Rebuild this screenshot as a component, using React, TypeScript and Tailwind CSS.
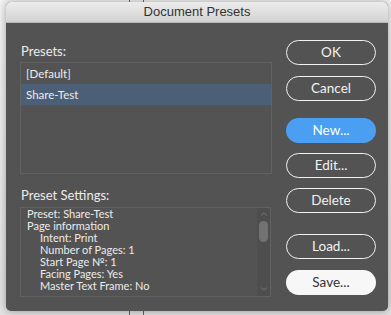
import { ChevronUp, ChevronDown } from "lucide-react";

const font = { fontFamily: "Lato, 'Open Sans', sans-serif" };

function PillButton({
  label,
  variant = "outline",
}: {
  label: string;
  variant?: "outline" | "primary" | "light";
}) {
  const base =
    "flex h-[25px] w-[90px] items-center justify-center rounded-full text-[13.5px]";
  const look =
    variant === "primary"
      ? "bg-[#4a9ff2] text-white"
      : variant === "light"
        ? "bg-[#f7f7f7] text-[#333]"
        : "border-[1.5px] border-[#f2f2f2] text-[#f2f2f2]";
  return <div className={`${base} ${look}`}>{label}</div>;
}

const settings: { text: string; indent?: boolean }[] = [
  { text: "Preset: Share-Test" },
  { text: "Page information" },
  { text: "Intent: Print", indent: true },
  { text: "Number of Pages: 1", indent: true },
  { text: "Start Page №: 1", indent: true },
  { text: "Facing Pages: Yes", indent: true },
  { text: "Master Text Frame: No", indent: true },
];

export default function App() {
  return (
    <div className="relative h-[315px] w-[391px] overflow-hidden bg-gradient-to-b from-[#f4f4f4] to-[#e2e2e2]">
      {/* guide lines from the document behind the dialog */}
      <div className="absolute left-[129px] top-0 h-full w-px bg-[#8a3cc8]" />
      <div className="absolute left-[143px] top-0 h-full w-px bg-[#8a3cc8]" />

      <div
        className="relative ml-[6px] mt-[2px] flex h-[309px] w-[382px] flex-col overflow-hidden rounded-[5px] bg-[#535353] shadow-[0_0_8px_rgba(0,0,0,0.35)]"
        style={font}
      >
        <div
          className="flex h-[21px] items-center justify-center border-b border-[#b5b5b5] bg-gradient-to-b from-[#ececec] to-[#d3d3d3] text-[13px] text-[#333]"
          style={{ fontFamily: "'Liberation Sans', Arial, sans-serif" }}
        >
          Document Presets
        </div>

        <div className="flex flex-1 pl-[14px] pr-[12px] pt-[17px]">
          <div className="flex w-[252px] flex-col pt-[2px]">
            <div className="pl-px text-[13px] leading-[18px] text-[#ececec]">
              Presets:
            </div>
            <div className="mt-[2px] h-[112px] border border-[#616161] bg-[#535353] text-[11.5px] text-[#ececec]">
              <div className="flex h-[21px] items-center pl-[5px]">
                [Default]
              </div>
              <div className="flex h-[21px] items-center bg-[#4b6077] pl-[5px]">
                Share-Test
              </div>
            </div>

            <div className="mt-[12px] pl-px text-[13px] leading-[18px] text-[#ececec]">
              Preset Settings:
            </div>
            <div className="mt-[3px] flex h-[90px] w-[251px] border border-[#616161] bg-[#535353]">
              <div className="flex-1 pl-[6px] text-[11px] leading-[12px] text-[#ececec]">
                {settings.map((s) => (
                  <div
                    key={s.text}
                    className={`h-[12px] whitespace-nowrap ${s.indent ? "pl-[13px]" : ""}`}
                  >
                    {s.text}
                  </div>
                ))}
              </div>
              <div className="flex w-[13px] flex-col items-center bg-[#4e4e4e]">
                <ChevronUp size={10} strokeWidth={1.5} className="mt-px text-[#8a8a8a]" />
                <div className="mt-[2px] h-[21px] w-[9px] rounded-full bg-[#727272]" />
                <div className="flex-1" />
                <ChevronDown size={10} strokeWidth={1.5} className="mb-[2px] text-[#8a8a8a]" />
              </div>
            </div>
          </div>

          <div className="ml-[14px] flex flex-col">
            <PillButton label="OK" />
            <div className="mt-[11px]">
              <PillButton label="Cancel" />
            </div>
            <div className="mt-[17px]">
              <PillButton label="New..." variant="primary" />
            </div>
            <div className="mt-[10px]">
              <PillButton label="Edit..." />
            </div>
            <div className="mt-[10px]">
              <PillButton label="Delete" />
            </div>
            <div className="mt-[21px]">
              <PillButton label="Load..." />
            </div>
            <div className="mt-[11px]">
              <PillButton label="Save..." variant="light" />
            </div>
          </div>
        </div>
      </div>
    </div>
  );
}
